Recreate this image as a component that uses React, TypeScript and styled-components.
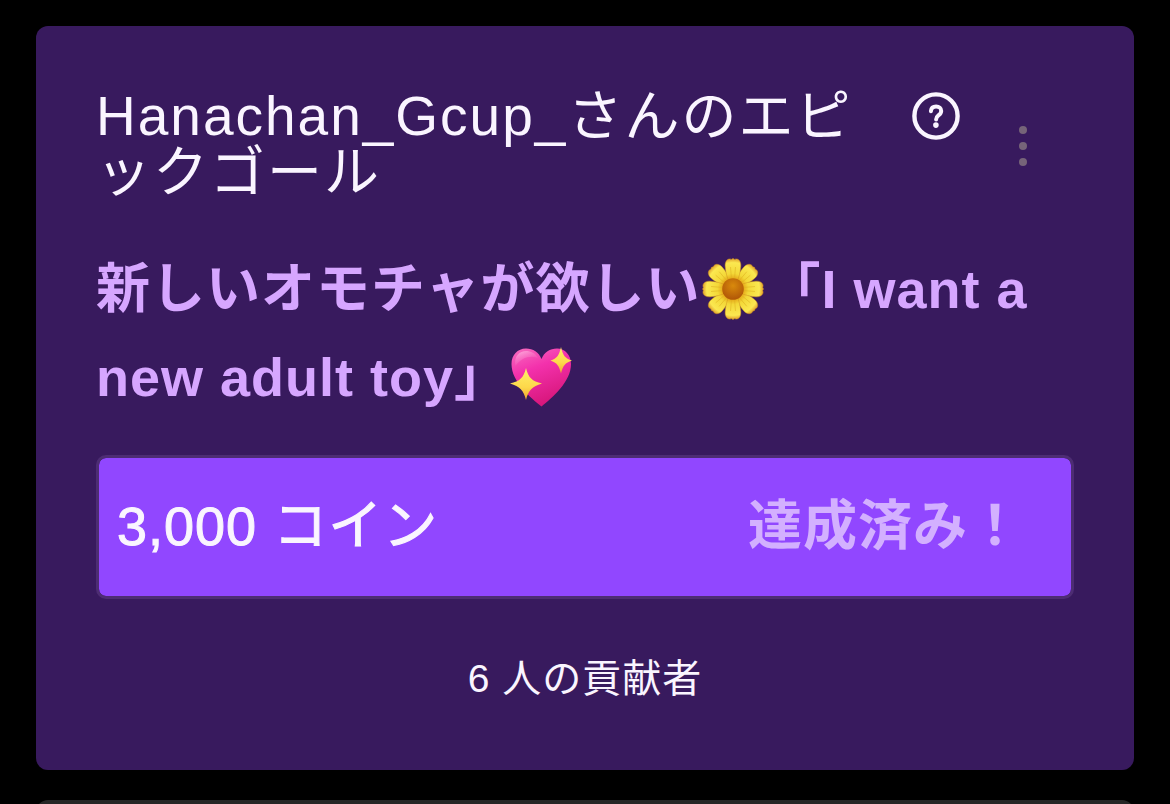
import React from "react";
import styled, { createGlobalStyle } from "styled-components";

const GlobalStyle = createGlobalStyle`
  *, *::before, *::after { box-sizing: border-box; }
  body {
    margin: 0;
    background: #000;
    color: #faf5ff;
    font-family: "Liberation Sans", "Noto Sans CJK JP", sans-serif;
    text-spacing-trim: space-all;
  }
`;

const Feed = styled.main`
  display: flex;
  flex-direction: column;
  gap: 30px;
  height: 100vh;
  padding: 26px 36px 0;
  overflow-y: auto;
  scrollbar-width: none;
`;

const GoalCard = styled.section`
  flex: none;
  padding: 60px 60px 68px;
  border-radius: 12px;
  background: #381a5e;
`;

const NextCard = styled.section`
  flex: none;
  height: 120px;
  border-radius: 12px;
  background: #262626;
`;

const Header = styled.header`
  display: flex;
  align-items: flex-start;
`;

const Title = styled.h1`
  flex: 1;
  margin: 0;
  padding-top: 2px;
  font-size: 55px;
  line-height: 56px;
  font-weight: 400;
  letter-spacing: 2px;
  line-break: loose;
`;

const IconButton = styled.button`
  display: flex;
  align-items: center;
  justify-content: center;
  flex: none;
  padding: 0;
  border: 0;
  background: none;
  color: inherit;
  cursor: pointer;
`;

const HelpButton = styled(IconButton)`
  width: 48px;
  height: 60px;
  margin-left: 12px;
`;

const MenuButton = styled(IconButton)`
  width: 102px;
  height: 120px;
  margin-left: 12px;
  color: #766479;
`;

const GoalText = styled.p`
  margin: 39px 0 34px;
  color: #d6a6ff;
  font-size: 54px;
  line-height: 88px;
  font-weight: 700;
  letter-spacing: 1px;
`;

const Emoji = styled.svg`
  width: 66px;
  height: 66px;
  vertical-align: -14px;
`;

const Progress = styled.div`
  display: flex;
  align-items: center;
  justify-content: space-between;
  height: 144px;
  padding: 0 48px 2px 18px;
  border: 3px solid #4d2d73;
  border-radius: 10px;
  background: #9147ff;
  background-clip: padding-box;
  font-size: 54px;
  line-height: 64px;
  letter-spacing: 1px;
`;

const Amount = styled.span`
  -webkit-text-stroke: 1px currentColor;
`;

const Status = styled.strong`
  color: #d3b0ff;
  font-weight: 700;
`;

const Contributors = styled.p`
  margin: 57px 0 0;
  font-size: 39px;
  line-height: 46px;
  letter-spacing: 1px;
  text-align: center;
`;

const HelpIcon = () => (
  <svg width="48" height="48" viewBox="0 0 48 48" fill="none" aria-hidden="true">
    <circle cx="24" cy="24" r="21.6" stroke="currentColor" strokeWidth="4.4" />
    <path
      d="M18.9 19.2c.3-3 2.3-4.6 5.2-4.6 3.1 0 5.1 1.8 5.1 4.3 0 2-1 3.1-2.8 4.5-1.7 1.3-2.3 2.3-2.3 4.2"
      stroke="currentColor"
      strokeWidth="4"
      strokeLinecap="round"
      strokeLinejoin="round"
    />
    <circle cx="23.9" cy="33.1" r="2.8" fill="currentColor" />
  </svg>
);

const DotsIcon = () => (
  <svg width="8" height="40" viewBox="0 0 8 40" fill="currentColor" aria-hidden="true">
    <circle cx="4" cy="4" r="4" />
    <circle cx="4" cy="20" r="4" />
    <circle cx="4" cy="36" r="4" />
  </svg>
);

const Flower = () => (
  <Emoji viewBox="0 0 66 66" role="img" aria-label="花">
    <defs>
      <radialGradient id="petal" gradientUnits="userSpaceOnUse" cx="33" cy="33" r="31">
        <stop offset="0.3" stopColor="#e3a012" />
        <stop offset="0.5" stopColor="#f3d838" />
        <stop offset="0.85" stopColor="#fbe850" />
        <stop offset="1" stopColor="#dc9426" />
      </radialGradient>
      <radialGradient id="core" cx="0.5" cy="0.35" r="0.6">
        <stop offset="0" stopColor="#d98a0c" />
        <stop offset="1" stopColor="#b35a08" />
      </radialGradient>
    </defs>
    {[45, 135, 225, 315, 0, 90, 180, 270].map((angle) => (
      <g key={angle} transform={`rotate(${angle} 33 33)`}>
        <path
          d="M33 32C29 27 26 20 25.2 10.5 24.8 6.500 26.500 3.500 29 3q1.500-.3 2.300.4 1.700-1.700 3.400 0Q35.500 2.700 37 3c2.500.5 4.200 3.500 3.800 7.500C40 20 37 27 33 32z"
          fill="url(#petal)"
          stroke="#d09020"
          strokeWidth="0.5"
        />
        <path d="M30.5 11l1 12M35.5 11l-1 12" stroke="#dfb021" strokeWidth="0.9" opacity="0.6" />
      </g>
    ))}
    <circle cx="33" cy="33" r="10.8" fill="url(#core)" />
  </Emoji>
);

const SparklingHeart = () => (
  <Emoji viewBox="0 0 66 66" role="img" aria-label="きらきらハート">
    <defs>
      <linearGradient id="heart" x1="0.2" y1="0" x2="0.6" y2="1">
        <stop offset="0" stopColor="#f765bd" />
        <stop offset="0.35" stopColor="#f331ac" />
        <stop offset="1" stopColor="#d51477" />
      </linearGradient>
      <linearGradient id="shine" x1="0" y1="0" x2="0.6" y2="1">
        <stop offset="0" stopColor="#ffb9e5" stopOpacity="0.9" />
        <stop offset="1" stopColor="#f765bd" stopOpacity="0" />
      </linearGradient>
      <linearGradient id="spark" x1="0" y1="0" x2="0" y2="1">
        <stop offset="0" stopColor="#fff06a" />
        <stop offset="0.6" stopColor="#fdd84a" />
        <stop offset="1" stopColor="#efa62d" />
      </linearGradient>
    </defs>
    <path
      d="M32.5 62.5C22 54 2.5 38 2.5 20 2.5 11 8.5 4.5 17 4.5c7 0 13 4 15.5 10.5C35 8.5 41 4.5 48 4.5c8 0 14 6.5 14 15.5C62 38 43 54 32.5 62.5z"
      fill="url(#heart)"
    />
    <path d="M6.5 22C4.5 12 11 7 17 7c5 0 9 2 12 7-8-3-17 0-22.5 8z" fill="url(#shine)" />
    <path
      d="M17 24c2.500 10 6 13 16 15.500C23 42.500 19.500 46 17 56 14.500 46 11 42.500 1 39.500 11 37 14.500 34 17 24z"
      fill="url(#spark)"
    />
    <path
      d="M52 3c2 8.500 4 11.500 11 13.500C56 19 54 21.500 52 29.500c-2-8-4-10.500-10.500-13C48 14.500 50 11.500 52 3z"
      fill="url(#spark)"
    />
  </Emoji>
);

export default function App() {
  return (
    <>
      <GlobalStyle />
      <Feed lang="ja">
        <GoalCard>
          <Header>
            <Title>Hanachan_Gcup_さんのエピックゴール</Title>
            <HelpButton type="button" aria-label="ヘルプ">
              <HelpIcon />
            </HelpButton>
            <MenuButton type="button" aria-label="メニュー">
              <DotsIcon />
            </MenuButton>
          </Header>
          <GoalText>
            新しいオモチャが欲しい
            <Flower />
            「I want a new adult toy」
            <SparklingHeart />
          </GoalText>
          <Progress role="progressbar" aria-label="ゴール" aria-valuenow={100}>
            <Amount>3,000 コイン</Amount>
            <Status>達成済み！</Status>
          </Progress>
          <Contributors>6 人の貢献者</Contributors>
        </GoalCard>
        <NextCard />
      </Feed>
    </>
  );
}
